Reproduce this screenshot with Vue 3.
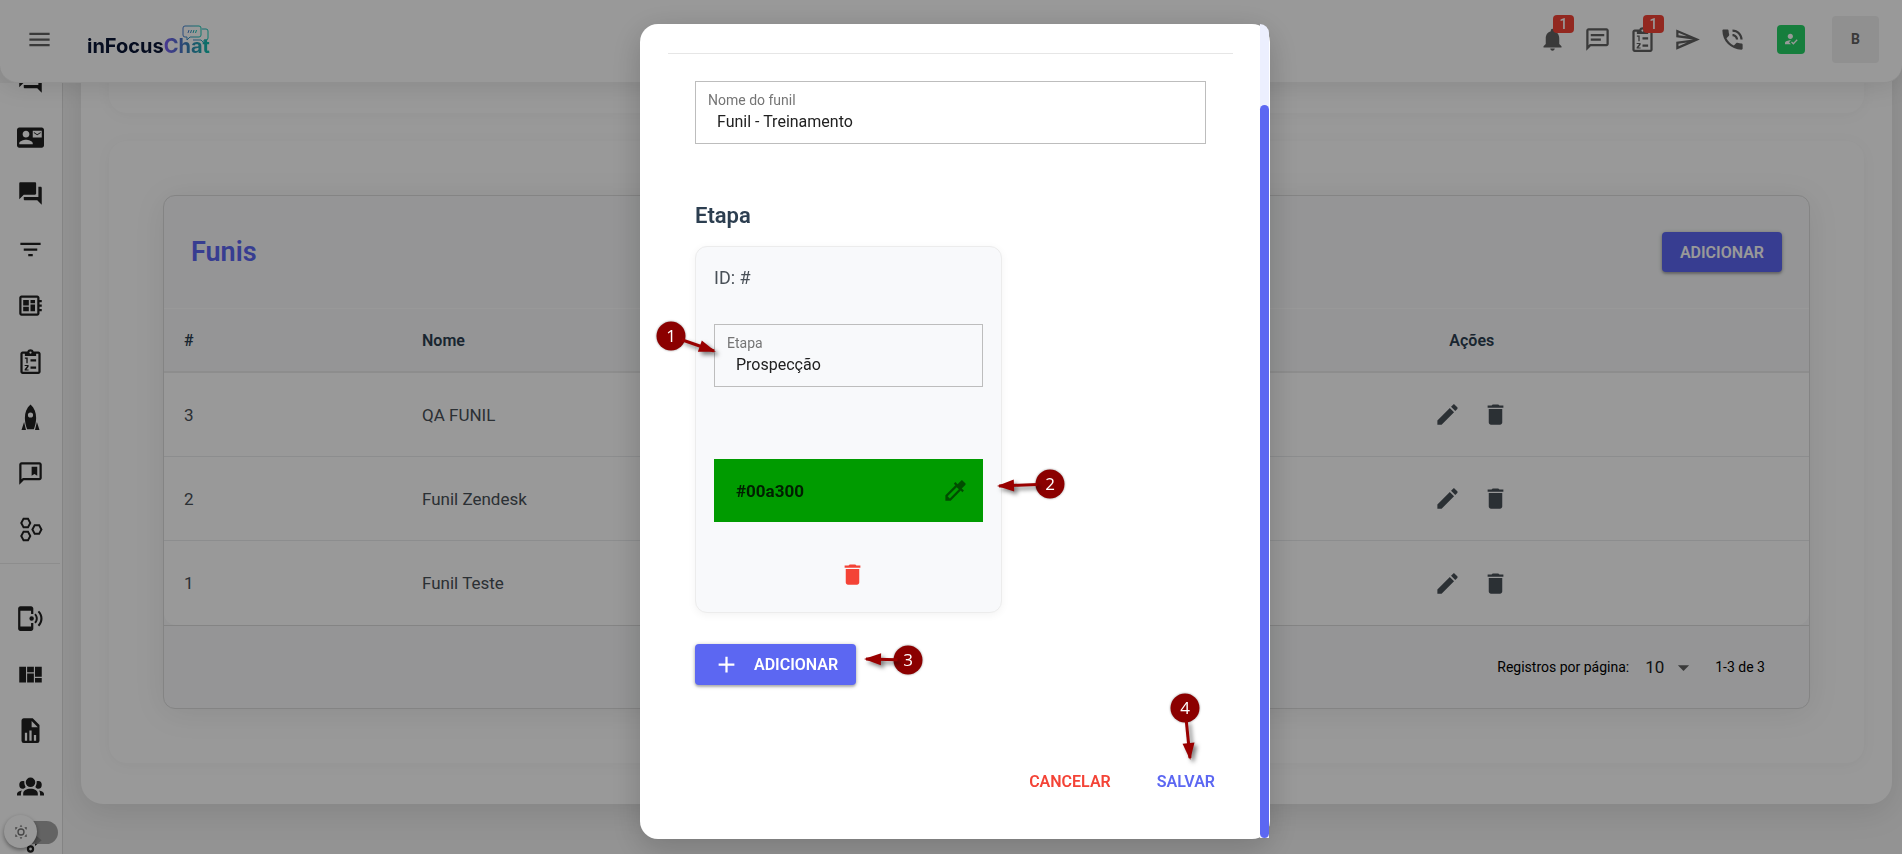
<template>
  <div class="app">
    <header class="topbar">
      <button class="icon-btn" aria-label="Menu">
        <svg class="icon" viewBox="0 0 24 24"><path :d="icons.menu" /></svg>
      </button>
      <a class="logo" href="#">
        <span class="logo-dark">inFocus</span><span class="logo-color">Chat</span>
        <svg class="logo-bubbles" viewBox="0 0 28 20">
          <defs>
            <linearGradient id="bubble" x1="0" x2="1">
              <stop offset="0" stop-color="#4a7fd0" />
              <stop offset="1" stop-color="#12c9b4" />
            </linearGradient>
          </defs>
          <g fill="none" stroke="url(#bubble)" stroke-width="1">
            <path d="M3 1h14q2 0 2 2v7q0 2-2 2H8l-3 3v-3H3q-2 0-2-2V3q0-2 2-2z" />
            <path d="M20 4h4q2 0 2 2v7q0 2-2 2h-2v3l-3-3h-8" />
            <path d="M6 8l1-3M8.500 8l1-3M11 8l1-3M13.500 8l1-3" />
          </g>
        </svg>
      </a>
      <nav class="tools">
        <button v-for="t in tools" :key="t.icon" class="icon-btn" :aria-label="t.label">
          <svg class="icon" viewBox="0 0 24 24"><path :d="icons[t.icon]" fill-rule="evenodd" /></svg>
          <span v-if="t.badge" class="badge">{{ t.badge }}</span>
        </button>
      </nav>
      <button class="status" aria-label="Online">
        <svg viewBox="0 0 24 24"><path :d="icons.userCheck" /></svg>
      </button>
      <button class="avatar">B</button>
    </header>

    <div class="layout">
      <aside class="sidebar">
        <ul>
          <li v-for="(item, i) in menu" :key="i" :class="{ divided: item.divided }">
            <a href="#" :aria-label="item.label">
              <svg class="icon" viewBox="0 0 24 24"><path :d="icons[item.icon]" fill-rule="evenodd" /></svg>
            </a>
          </li>
        </ul>
        <label class="theme">
          <input type="checkbox" aria-label="Tema escuro" />
          <span class="knob">
            <svg viewBox="0 0 24 24">
              <circle cx="12" cy="12" r="4.500" fill="none" stroke="currentColor" stroke-width="2" />
              <path d="M12 1l2 3h-4zM12 23l2-3h-4zM3 5l4 0-3 4zM21 5l-4 0 3 4zM3 19l4 0-3-4zM21 19l-4 0 3-4z" />
            </svg>
          </span>
        </label>
      </aside>

      <main class="page">
        <section class="panel panel-top"></section>
        <section class="panel">
          <div class="table-card">
            <div class="table-head">
              <h1>Funis</h1>
              <button class="btn">ADICIONAR</button>
            </div>
            <table>
              <thead>
                <tr>
                  <th class="col-id">#</th>
                  <th>Nome</th>
                  <th class="col-actions center">Ações</th>
                </tr>
              </thead>
              <tbody>
                <tr v-for="funil in funis" :key="funil.id">
                  <td>{{ funil.id }}</td>
                  <td>{{ funil.nome }}</td>
                  <td class="center">
                    <div class="actions">
                      <button class="icon-btn" aria-label="Editar">
                        <svg class="icon" viewBox="0 0 24 24"><path :d="icons.edit" /></svg>
                      </button>
                      <button class="icon-btn" aria-label="Excluir">
                        <svg class="icon" viewBox="0 0 24 24"><path :d="icons.trash" /></svg>
                      </button>
                    </div>
                  </td>
                </tr>
              </tbody>
            </table>
            <div class="table-foot">
              <label for="perPage">Registros por página:</label>
              <div class="per-page">
                <select id="perPage" v-model="perPage">
                  <option>10</option>
                  <option>20</option>
                  <option>50</option>
                </select>
                <svg class="icon" viewBox="0 0 24 24"><path d="M7 10l5 5 5-5z" /></svg>
              </div>
              <span>1-3 de 3</span>
            </div>
          </div>
        </section>
      </main>
    </div>

    <div class="backdrop">
      <div class="dialog" role="dialog" aria-modal="true">
        <form class="dialog-body" @submit.prevent>
          <hr />
          <div class="fields">
            <div class="field">
              <label for="nome">Nome do funil</label>
              <input id="nome" v-model="nome" type="text" />
            </div>
            <h2>Etapa</h2>
            <div class="stage">
              <p>ID: #</p>
              <div class="field">
                <label for="etapa">Etapa</label>
                <input id="etapa" v-model="etapa" type="text" />
              </div>
              <div class="color">
                <input v-model="cor" type="text" aria-label="Cor" />
                <button type="button" class="icon-btn" aria-label="Escolher cor">
                  <svg class="icon" viewBox="0 0 24 24"><path :d="icons.picker" /></svg>
                </button>
              </div>
              <button type="button" class="icon-btn remove" aria-label="Excluir etapa">
                <svg class="icon" viewBox="0 0 24 24"><path :d="icons.trash" /></svg>
              </button>
            </div>
            <button type="button" class="btn btn-add">
              <svg class="icon" viewBox="0 0 24 24"><path :d="icons.add" /></svg>
              ADICIONAR
            </button>
            <div class="dialog-actions">
              <button type="button" class="flat danger">CANCELAR</button>
              <button type="submit" class="flat">SALVAR</button>
            </div>
          </div>
        </form>
        <div class="track"><div class="thumb"></div></div>

        <svg class="steps" width="630" height="815">
          <g v-for="s in steps" :key="s.n">
            <circle :cx="s.x" :cy="s.y" r="14.500" />
            <g class="arrow">
              <line :x1="s.x + (s.tx - s.x) * 0.25" :y1="s.y + (s.ty - s.y) * 0.25" :x2="s.tx" :y2="s.ty" />
              <path d="M2 0L-15 6L-15 -6Z" :transform="`translate(${s.tx} ${s.ty}) rotate(${angle(s)})`" />
            </g>
            <text :x="s.x" :y="s.y + 6">{{ s.n }}</text>
          </g>
        </svg>
      </div>
    </div>
  </div>
</template>

<script setup>
import { ref } from "vue";

const perPage = ref("10");
const nome = ref("Funil - Treinamento");
const etapa = ref("Prospecção");
const cor = ref("#00a300");

const funis = ref([
  { id: 3, nome: "QA FUNIL" },
  { id: 2, nome: "Funil Zendesk" },
  { id: 1, nome: "Funil Teste" },
]);

const tools = [
  { icon: "bell", label: "Notificações", badge: 1 },
  { icon: "chat", label: "Mensagens" },
  { icon: "clipboard", label: "Tarefas", badge: 1 },
  { icon: "send", label: "Enviar" },
  { icon: "phone", label: "Ligações" },
];

const menu = [
  { icon: "forum", label: "Chat" },
  { icon: "contact", label: "Contatos" },
  { icon: "forum", label: "Conversas" },
  { icon: "filter", label: "Funil" },
  { icon: "board", label: "Painel" },
  { icon: "clipboard", label: "Tarefas" },
  { icon: "rocket", label: "Campanhas" },
  { icon: "bookmark", label: "Mensagens rápidas" },
  { icon: "hexagons", label: "Integrações" },
  { icon: "mobile", label: "Canais", divided: true },
  { icon: "quilt", label: "Kanban" },
  { icon: "report", label: "Relatórios" },
  { icon: "group", label: "Usuários" },
  { icon: "flow", label: "Fluxos" },
];

// coordinates relative to the dialog
const steps = [
  { n: 1, x: 31, y: 312, tx: 74, ty: 327 },
  { n: 2, x: 410, y: 460, tx: 359, ty: 462 },
  { n: 3, x: 268, y: 636, tx: 226, ty: 635 },
  { n: 4, x: 545, y: 684, tx: 550, ty: 734 },
];

const angle = (s) => (Math.atan2(s.ty - s.y, s.tx - s.x) * 180) / Math.PI;

const icons = {
  menu: "M3 6h18v2H3zM3 11h18v2H3zM3 16h18v2H3z",
  bell: "M12 22c1.100 0 2-.9 2-2h-4c0 1.100.89 2 2 2zm6-6v-5c0-3.070-1.640-5.640-4.500-6.320V4c0-.83-.67-1.500-1.500-1.500s-1.500.67-1.500 1.500v.68C7.630 5.360 6 7.920 6 11v5l-2 2v1h16v-1l-2-2z",
  chat: "M20 2H4c-1.100 0-2 .9-2 2v18l4-4h14c1.100 0 2-.9 2-2V4c0-1.100-.9-2-2-2zm0 14H5.200L4 17.200V4h16zM6 7h12v2H6zM6 11h9v2H6z",
  clipboard: "M19 3h-4.200C14.400 1.800 13.300 1 12 1s-2.400.8-2.800 2H5c-1.100 0-2 .9-2 2v16c0 1.100.9 2 2 2h14c1.100 0 2-.9 2-2V5c0-1.100-.9-2-2-2zM12 3a1 1 0 0 1 0 2 1 1 0 0 1 0-2zM19 21H5V5h2v2h10V5h2zM12 10h5v2h-5zM12 16.500h5v2h-5zM7 8.500h2.500v5H8.300v-4H7zM6.800 15h3.500v1.700L8.400 19h1.900v1H6.800v-1.200l2.100-2.600V16H6.800z",
  send: "M4 6l7.500 3.200L4 8.200zM11.500 14.700L4 18v-2.200zM2 3v7l15 2-15 2v7l21-9z",
  phone: "M20 15.500c-1.250 0-2.450-.2-3.570-.57-.35-.11-.74-.03-1.020.24l-2.200 2.200c-2.830-1.440-5.150-3.750-6.590-6.590l2.200-2.210c.28-.26.36-.65.25-1C8.700 6.450 8.500 5.250 8.500 4c0-.55-.45-1-1-1H4c-.55 0-1 .45-1 1 0 9.390 7.610 17 17 17 .55 0 1-.45 1-1v-3.500c0-.55-.45-1-1-1zM19 12h2c0-4.970-4.030-9-9-9v2c3.870 0 7 3.130 7 7zm-4 0h2c0-2.760-2.240-5-5-5v2c1.660 0 3 1.340 3 3z",
  userCheck: "M9 17l3-2.940c-.39-.04-.68-.06-1-.06-2.670 0-8 1.340-8 4v2h9l-3-3zm2-5c2.210 0 4-1.790 4-4s-1.790-4-4-4-4 1.790-4 4 1.790 4 4 4zm4.470 8.500L12 17l1.400-1.410 2.070 2.080 5.130-5.170 1.400 1.410-6.530 6.590z",
  forum: "M21 6h-2v9H6v2c0 .55.45 1 1 1h11l4 4V7c0-.55-.45-1-1-1zm-4 6V3c0-.55-.45-1-1-1H3c-.55 0-1 .45-1 1v14l4-4h10c.55 0 1-.45 1-1z",
  contact: "M21 8V7l-3 2-3-2v1l3 2 3-2zm1-5H2C.9 3 0 3.900 0 5v14c0 1.100.9 2 2 2h20c1.100 0 2-.9 2-2V5c0-1.100-.9-2-2-2zM8 6c1.660 0 3 1.340 3 3s-1.340 3-3 3-3-1.340-3-3 1.340-3 3-3zm6 12H2v-1c0-2 4-3.100 6-3.100s6 1.100 6 3.100v1zm8-6h-8V6h8v6z",
  filter: "M10 18h4v-2h-4v2zM3 6v2h18V6H3zm3 7h12v-2H6v2z",
  board: "M22 9V7h-2V5c0-1.100-.9-2-2-2H4c-1.100 0-2 .9-2 2v14c0 1.100.9 2 2 2h14c1.100 0 2-.9 2-2v-2h2v-2h-2v-2h2v-2h-2V9h2zm-4 10H4V5h14v14zM5.500 13h5v4h-5zM12 7h4v3h-4zM5.500 7h5v5h-5zM12 11h4v6h-4z",
  rocket: "M12 .5C8.500 3.500 7 7.500 7 12.500c0 3.500.8 6.500 2 10h6c1.200-3.500 2-6.500 2-10 0-5-1.500-9-5-12zM12 7.500a2.300 2.300 0 0 1 0 4.600 2.300 2.300 0 0 1 0-4.600zM6.300 16L4 23h4zM17.700 16L20 23h-4z",
  bookmark: "M20 2H4c-1.100 0-2 .9-2 2v18l4-4h14c1.100 0 2-.9 2-2V4c0-1.100-.9-2-2-2zm0 14H5.200L4 17.200V4h16zM13 6h5v8l-2.500-1.500L13 14z",
  hexagons: "M5.300 1.500h5L12.800 6.200l-2.500 4.700h-5L2.800 6.200zM6.300 3.300L4.800 6.200l1.500 2.900h3l1.500-2.900-1.500-2.900zM15.200 7.300h5L22.700 12l-2.500 4.700h-5L12.700 12zM16.200 9.100L14.700 12l1.500 2.900h3l1.500-2.900-1.500-2.900zM5.300 13.100h5l2.500 4.700-2.500 4.700h-5l-2.500-4.700zM6.300 14.900l-1.500 2.900 1.500 2.900h3l1.500-2.900-1.500-2.900z",
  mobile: "M3 1h9.500c1.100 0 2 .9 2 2v5h-2V5H3v14h9.500v-3h2v5c0 1.100-.9 2-2 2H3c-1.100 0-2-.9-2-2V3c0-1.100.9-2 2-2zM13 10a2 2 0 0 1 0 4 2 2 0 0 1 0-4zM16.600 7.500c2.500 2.600 2.500 6.400 0 9l-1.200-1.200c1.800-2 1.800-4.600 0-6.600zM19.700 5c4 4 4 10 0 14l-1.300-1.200c3.200-3.400 3.200-8.200 0-11.600z",
  quilt: "M2 5h6v14H2zM9 5h6v5H9zM9 11h6v8H9zM16 5h6v9h-6zM16 15h6v4h-6z",
  report: "M13 9h5.500L13 3.500V9M6 1h8l6 6v14a2 2 0 0 1-2 2H6a2 2 0 0 1-2-2V3c0-1.100.9-2 2-2m1 20h2v-7H7v7m4 0h2v-9h-2v9m4 0h2v-5h-2v5z",
  group: "M12 4a3.500 3.500 0 0 1 0 8.500A3.500 3.500 0 0 1 12 4M5 7c.56 0 1.080.15 1.530.42-.15 1.930.27 3.350 1.130 4.960C7.160 13.340 6.160 14 5 14a3 3.500 0 0 1 0-7m14 0a3 3.500 0 0 1 0 7c-1.160 0-2.160-.66-2.660-1.620.86-1.610 1.280-3.030 1.130-4.960C17.920 7.150 18.440 7 19 7M5.500 18.250c0-2.570 2.910-4.250 6.500-4.250s6.500 1.680 6.500 4.250V20h-13v-1.750M0 20v-1.500c0-1.390 1.890-2.560 4.450-2.900-.59.68-.95 1.620-.95 2.650V20H0m24 0h-3.500v-1.750c0-1.030-.36-1.970-.95-2.650 2.560.34 4.450 1.510 4.450 2.900V20z",
  flow: "M12 14.500a3 3 0 0 1 0 6.500 3 3 0 0 1 0-6.500zM12 16.500a1.200 1.200 0 0 0 0 2.500 1.200 1.200 0 0 0 0-2.500zM14 12V8h2V5l6 5-6 5v-3z",
  edit: "M3 17.250V21h3.750L17.810 9.940l-3.750-3.750L3 17.250zM20.710 7.040c.39-.39.39-1.020 0-1.410l-2.340-2.340c-.39-.39-1.020-.39-1.410 0l-1.830 1.830 3.750 3.750 1.830-1.830z",
  trash: "M6 19c0 1.100.9 2 2 2h8c1.100 0 2-.9 2-2V7H6v12zM19 4h-3.500l-1-1h-5l-1 1H5v2h14V4z",
  picker: "M20.710 5.630l-2.340-2.340c-.39-.39-1.020-.39-1.410 0l-3.120 3.120-1.930-1.910-1.410 1.410 1.420 1.420L3 16.250V21h4.750l8.920-8.920 1.420 1.420 1.410-1.410-1.920-1.920 3.120-3.120c.4-.4.4-1.030.01-1.420zM6.920 19L5 17.080l8.060-8.060 1.920 1.920L6.920 19z",
  add: "M19 13h-6v6h-2v-6H5v-2h6V5h2v6h6v2z",
};
</script>

<style>
body {
  margin: 0;
  background: #f5f5f5;
}
</style>

<style scoped>
* {
  box-sizing: border-box;
}

.app {
  min-height: 100vh;
  font-family: Roboto, "Liberation Sans", sans-serif;
  font-size: 16px;
  color: #212121;
}

button,
input,
select {
  font: inherit;
  border: 0;
  background: none;
  padding: 0;
}

.icon {
  display: block;
  width: 27px;
  height: 27px;
  fill: currentColor;
}

.icon-btn {
  position: relative;
  color: inherit;
}

.topbar {
  position: fixed;
  z-index: 2;
  top: 0;
  left: 0;
  right: 0;
  height: 83px;
  display: flex;
  align-items: center;
  padding: 0 23px 4px 26px;
  background: #ffffff;
  border-bottom: 1px solid #f0f0f0;
  border-radius: 0 0 18px 18px;
  box-shadow: 0 4px 24px rgba(0, 0, 0, 0.1);
  color: #616161;
}

.logo {
  position: relative;
  margin: 13px auto 0 34px;
  font: 700 20px/24px Inter, sans-serif;
  text-decoration: none;
}

.logo-dark {
  color: #0a1636;
}

.logo-color {
  color: transparent;
  background: linear-gradient(90deg, #7b5cf5, #3c7fb8 50%, #10c4ae);
  background-clip: text;
}

.logo-bubbles {
  position: absolute;
  right: 0;
  top: -9px;
  width: 28px;
  height: 20px;
}

.tools {
  display: flex;
  gap: 18px;
}

.badge {
  position: absolute;
  left: 14px;
  top: -11px;
  width: 21px;
  height: 18px;
  border-radius: 4px;
  background: #f44336;
  color: #ffffff;
  font-size: 14px;
  font-weight: 500;
  line-height: 18px;
}

.status {
  width: 28px;
  height: 29px;
  margin: 0 27px 0 31px;
  border-radius: 4px;
  background: #25d366;
  color: #ffffff;
}

.status svg {
  display: block;
  width: 16px;
  margin: auto;
  fill: currentColor;
}

.avatar {
  width: 47px;
  height: 47px;
  border-radius: 4px;
  background: #f0f0f0;
  color: #616161;
  font-size: 14px;
  font-weight: 700;
}

.layout {
  display: flex;
  align-items: flex-start;
}

.sidebar {
  position: sticky;
  top: 83px;
  flex: none;
  width: 63px;
  height: calc(100vh - 83px);
  margin-top: 83px;
  overflow: hidden;
  background: #ffffff;
  border-right: 1px solid #dcdcdc;
}

.sidebar ul {
  list-style: none;
  margin: -30px 0 0;
  padding: 0 2px 0 0;
}

.sidebar li a {
  display: flex;
  align-items: center;
  justify-content: center;
  height: 56px;
  color: #212121;
}

.sidebar .divided {
  margin: 6px 0 0;
  padding-top: 26px;
  border-top: 1px solid #ebebeb;
}

.theme {
  position: absolute;
  left: 20px;
  bottom: 10px;
  width: 38px;
  height: 23px;
}

.theme input {
  appearance: none;
  display: block;
  width: 38px;
  height: 23px;
  margin: 0;
  border-radius: 12px;
  background: rgba(150, 150, 150, 0.85);
}

.knob {
  position: absolute;
  left: -16px;
  top: -6px;
  width: 33px;
  height: 33px;
  display: flex;
  align-items: center;
  justify-content: center;
  border-radius: 50%;
  background: #ffffff;
  box-shadow: 0 2px 4px rgba(0, 0, 0, 0.4);
  color: #757575;
}

.knob svg {
  width: 16px;
  fill: currentColor;
}

.page {
  flex: 1;
  margin: 0 10px 50px 18px;
  padding: 0 28px 41px;
  border-radius: 0 0 22px 22px;
  background: #ffffff;
  box-shadow: 0 8px 32px rgba(0, 0, 0, 0.1);
}

.panel {
  padding: 54px;
  border-radius: 18px;
  background: #ffffff;
  box-shadow: 0 2px 16px rgba(0, 0, 0, 0.04);
}

.panel-top {
  height: 113px;
  margin-bottom: 28px;
}

.table-card {
  border: 1px solid #dcdcdc;
  border-radius: 12px;
  background: #f8f9fa;
  box-shadow: 0 4px 32px rgba(0, 0, 0, 0.08);
}

.table-head {
  display: flex;
  align-items: center;
  justify-content: space-between;
  height: 113px;
  padding: 0 27px;
  border-bottom: 1px solid #ffffff;
}

h1 {
  margin: 0;
  font-size: 27px;
  font-weight: 600;
  color: #5c67f2;
}

.btn {
  height: 40px;
  padding: 0 18px;
  border-radius: 4px;
  background: #5c67f2;
  color: #ffffff;
  font-weight: 600;
  box-shadow: 0 1px 4px rgba(0, 0, 0, 0.3), 0 2px 2px rgba(0, 0, 0, 0.15);
}

table {
  width: 100%;
  border-spacing: 0;
  table-layout: fixed;
}

th {
  height: 64px;
  padding: 0 20px;
  border-bottom: 2px solid #ebebeb;
  text-align: left;
  font-weight: 600;
  color: #2c3e50;
}

.col-id {
  width: 238px;
}

.col-actions {
  width: 41%;
}

td {
  height: 84px;
  padding: 0 20px;
  border-bottom: 1px solid #e9ebed;
  background: #ffffff;
  font-size: 17px;
  color: #495057;
}

tbody tr:last-child td {
  border-bottom: 0;
}

tbody tr:last-child td:first-child {
  border-bottom-left-radius: 12px;
}

tbody tr:last-child td:last-child {
  border-bottom-right-radius: 12px;
}

.center {
  text-align: center;
}

.actions {
  display: flex;
  justify-content: center;
  gap: 21px;
}

.table-foot {
  display: flex;
  align-items: center;
  justify-content: flex-end;
  height: 83px;
  padding: 0 44px;
  border-top: 1px solid #dcdcdc;
  font-size: 14px;
  color: #000000;
}

.per-page {
  display: flex;
  align-items: center;
  margin: 0 18px 0 16px;
  color: #616161;
}

.per-page select {
  appearance: none;
  width: 25px;
  font-size: 17px;
  color: #212121;
}

.backdrop {
  position: fixed;
  z-index: 5;
  inset: 0;
  display: flex;
  justify-content: center;
  padding: 24px 16px 15px 24px;
  background: rgba(0, 0, 0, 0.4);
}

.dialog {
  position: relative;
  display: flex;
  width: 100%;
  max-width: 630px;
  border-radius: 18px;
  background: #ffffff;
  box-shadow: 0 8px 32px rgba(0, 0, 0, 0.2);
}

.dialog-body {
  flex: 1;
  padding: 29px 27px 0 28px;
}

hr {
  height: 1px;
  margin: 0;
  border: 0;
  background: #e6e6e6;
}

.fields {
  padding: 27px;
}

.field {
  display: flex;
  flex-direction: column;
  height: 63px;
  padding: 8px 12px;
  border: 1px solid #bdbdbd;
}

.field label {
  font-size: 14px;
  line-height: 20px;
  color: #757575;
}

.field input {
  height: 22px;
  padding: 0 9px;
  color: #212121;
  outline: 0;
}

h2 {
  margin: 56px 0 14px;
  font-size: 22px;
  line-height: 32px;
  font-weight: 600;
  color: #2c3e50;
}

.stage {
  display: flex;
  flex-direction: column;
  width: 60%;
  padding: 18px;
  border: 1px solid #ececec;
  border-radius: 12px;
  background: #f8f9fb;
  box-shadow: 0 2px 8px rgba(0, 0, 0, 0.05);
}

.stage p {
  margin: 0 0 33px;
  font-size: 18px;
  line-height: 26px;
  color: #495057;
}

.color {
  display: flex;
  align-items: center;
  height: 63px;
  margin: 72px 0 32px;
  padding: 0 14px 0 22px;
  background: #009b00;
  color: #004d00;
}

.color input {
  flex: 1;
  min-width: 0;
  font-size: 17px;
  font-weight: 700;
  color: #001f00;
  outline: 0;
}

.remove {
  align-self: center;
  height: 40px;
  margin-left: 8px;
  color: #f44336;
}

.btn-add {
  display: flex;
  align-items: center;
  gap: 14px;
  height: 41px;
  margin-top: 31px;
}

.dialog-actions {
  display: flex;
  justify-content: flex-end;
  gap: 10px;
  margin: 78px -27px 0 0;
}

.flat {
  height: 36px;
  padding: 0 18px;
  font-weight: 600;
  color: #5c67f2;
}

.flat.danger {
  color: #f44336;
}

.track {
  display: flex;
  align-items: flex-end;
  width: 9px;
  margin: 0 1px 1px 0;
  border-radius: 0 18px 0 0;
  background: #eceffe;
}

.thumb {
  width: 100%;
  height: 90%;
  border-radius: 5px;
  background: #5c67f2;
}

.steps {
  position: absolute;
  left: 0;
  top: 0;
  overflow: visible;
  pointer-events: none;
  fill: #8b0000;
}

.steps circle {
  filter: drop-shadow(0 0 1px rgba(0, 0, 0, 0.4));
}

.arrow {
  fill: #990000;
  stroke: #990000;
  filter: drop-shadow(3px 3px 2px rgba(0, 0, 0, 0.5));
}

.arrow line {
  stroke-width: 3;
}

.arrow path {
  stroke: none;
}

.steps text {
  fill: #ffffff;
  font-family: "Open Sans", sans-serif;
  font-size: 17px;
  text-anchor: middle;
}
</style>
